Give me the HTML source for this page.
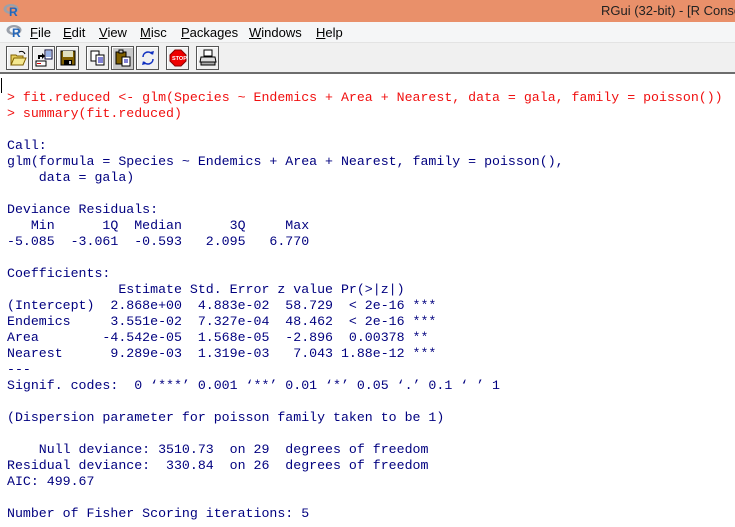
<!DOCTYPE html>
<html><head><meta charset="utf-8"><style>
*{margin:0;padding:0;box-sizing:border-box}
body{width:735px;height:527px;overflow:hidden;background:#fff;font-family:"Liberation Sans",sans-serif;position:relative}
#title{position:absolute;left:0;top:0;width:735px;height:22px;background:#E9906A}
#title .t{position:absolute;left:601px;top:3px;font-size:13px;color:#222;white-space:nowrap}
#menu{position:absolute;left:0;top:22px;width:735px;height:21px;background:#F5F6F7;border-bottom:1px solid #E3E3E3}
#menu span{position:absolute;top:3px;font-size:13px;color:#000}
#tb{position:absolute;left:0;top:43px;width:735px;height:31px;background:#F0F0F0;border-bottom:2px solid #6d6d6d}
.b{position:absolute;top:3px;width:23px;height:24px;border:1px solid #555;background:#F0F0F0;box-shadow:inset 1px 1px #fff}
.b svg{position:absolute;left:2px;top:2px}
#con{position:absolute;left:7px;top:90px;font-family:"Liberation Mono",monospace;font-size:13.25px;line-height:16px;color:#00007F;white-space:pre}
.r{color:#f01010}
#caret{position:absolute;left:1px;top:78px;width:1px;height:15px;background:#000}
</style></head><body>
<div id="title">
<svg style="position:absolute;left:3px;top:3px" width="18" height="14" viewBox="0 0 18 14"><ellipse cx="8" cy="6" rx="7.5" ry="5" fill="#9aa0aa"/><ellipse cx="8" cy="6" rx="4.5" ry="2.8" fill="#E9906A"/><text x="6" y="13" font-size="12" font-weight="bold" fill="#2266bb" font-family="Liberation Sans">R</text></svg>
<span class="t">RGui (32-bit) - [R Console]</span></div>
<div id="menu">
<svg style="position:absolute;left:6px;top:2px" width="18" height="14" viewBox="0 0 18 14"><ellipse cx="8" cy="6" rx="7.5" ry="5" fill="#9aa0aa"/><ellipse cx="8" cy="6" rx="4.5" ry="2.8" fill="#F5F6F7"/><text x="6" y="13" font-size="12" font-weight="bold" fill="#2266bb" font-family="Liberation Sans">R</text></svg>
<span style="left:30px"><u>F</u>ile</span><span style="left:63px"><u>E</u>dit</span><span style="left:99px"><u>V</u>iew</span><span style="left:140px"><u>M</u>isc</span><span style="left:181px"><u>P</u>ackages</span><span style="left:249px"><u>W</u>indows</span><span style="left:316px"><u>H</u>elp</span></div>
<div id="tb">
<div class="b" style="left:6px"><svg width="18" height="18"><path d="M2 6h5l1 1h6v9H2z" fill="#e8d060" stroke="#806000"/><path d="M2 16l3-7h12l-3 7z" fill="#f4e890" stroke="#806000"/><path d="M10 3q4 -2 6 2" stroke="#000" fill="none"/></svg></div>
<div class="b" style="left:32px"><svg width="18" height="18"><rect x="10" y="1" width="7" height="9" fill="#fff" stroke="#003"/><path d="M11 3h5M11 5h5M11 7h5" stroke="#36c"/><path d="M3 10V6h4V4l3 3-3 3V8H5v2" fill="#000"/><rect x="1" y="12" width="10" height="5" fill="#fff" stroke="#000"/><rect x="2" y="14" width="4" height="1" fill="#d00"/></svg></div>
<div class="b" style="left:56px"><svg width="18" height="18"><rect x="2" y="2" width="14" height="14" fill="#806000" stroke="#000"/><rect x="4" y="2" width="10" height="6" fill="#e0e0c0"/><rect x="5" y="11" width="8" height="5" fill="#000"/><rect x="10" y="12" width="2" height="3" fill="#ccc"/></svg></div>
<div class="b" style="left:86px"><svg width="18" height="18"><rect x="2" y="2" width="8" height="10" fill="#fff" stroke="#000"/><rect x="7" y="6" width="8" height="10" fill="#fff" stroke="#000"/><path d="M9 9h5M9 11h5M9 13h5" stroke="#00a"/></svg></div>
<div class="b" style="left:111px;background:#c8c8c8"><svg width="18" height="18"><rect x="2" y="3" width="10" height="12" fill="#806000" stroke="#000"/><rect x="5" y="1" width="4" height="3" fill="#ccc" stroke="#000"/><rect x="8" y="8" width="8" height="9" fill="#fff" stroke="#000"/><path d="M10 11h4M10 13h4" stroke="#00a"/></svg></div>
<div class="b" style="left:136px"><svg width="18" height="18"><path d="M4 8a5 5 0 0 1 9-3M14 10a5 5 0 0 1-9 3" stroke="#1030c0" stroke-width="1.5" fill="none"/><path d="M11 3l3 3 1-4zM7 15l-3-3-1 4z" fill="#1030c0"/></svg></div>
<div class="b" style="left:166px"><svg width="18" height="18"><polygon points="6,1 12,1 17,6 17,12 12,17 6,17 1,12 1,6" fill="#e00" stroke="#800"/><text x="3" y="11" font-size="5.5" fill="#fff" font-weight="bold" font-family="Liberation Sans">STOP</text></svg></div>
<div class="b" style="left:196px"><svg width="18" height="18"><rect x="5" y="1" width="8" height="6" fill="#fff" stroke="#000"/><path d="M2 8h14l1 5H1z" fill="#ddd" stroke="#000"/><rect x="2" y="13" width="14" height="3" fill="#aaa" stroke="#000"/></svg></div>
</div>
<div id="caret"></div>
<div id="con"><span class="r">&gt; </span><span class="r">fit.reduced &lt;- glm(Species ~ Endemics + Area + Nearest, data = gala, family = poisson())</span>
<span class="r">&gt; summary(fit.reduced)</span>

Call:
glm(formula = Species ~ Endemics + Area + Nearest, family = poisson(), 
    data = gala)

Deviance Residuals: 
   Min      1Q  Median      3Q     Max  
-5.085  -3.061  -0.593   2.095   6.770  

Coefficients:
              Estimate Std. Error z value Pr(&gt;|z|)    
(Intercept)  2.868e+00  4.883e-02  58.729  &lt; 2e-16 ***
Endemics     3.551e-02  7.327e-04  48.462  &lt; 2e-16 ***
Area        -4.542e-05  1.568e-05  -2.896  0.00378 ** 
Nearest      9.289e-03  1.319e-03   7.043 1.88e-12 ***
---
Signif. codes:  0 ‘***’ 0.001 ‘**’ 0.01 ‘*’ 0.05 ‘.’ 0.1 ‘ ’ 1

(Dispersion parameter for poisson family taken to be 1)

    Null deviance: 3510.73  on 29  degrees of freedom
Residual deviance:  330.84  on 26  degrees of freedom
AIC: 499.67

Number of Fisher Scoring iterations: 5
</div>
</body></html>
